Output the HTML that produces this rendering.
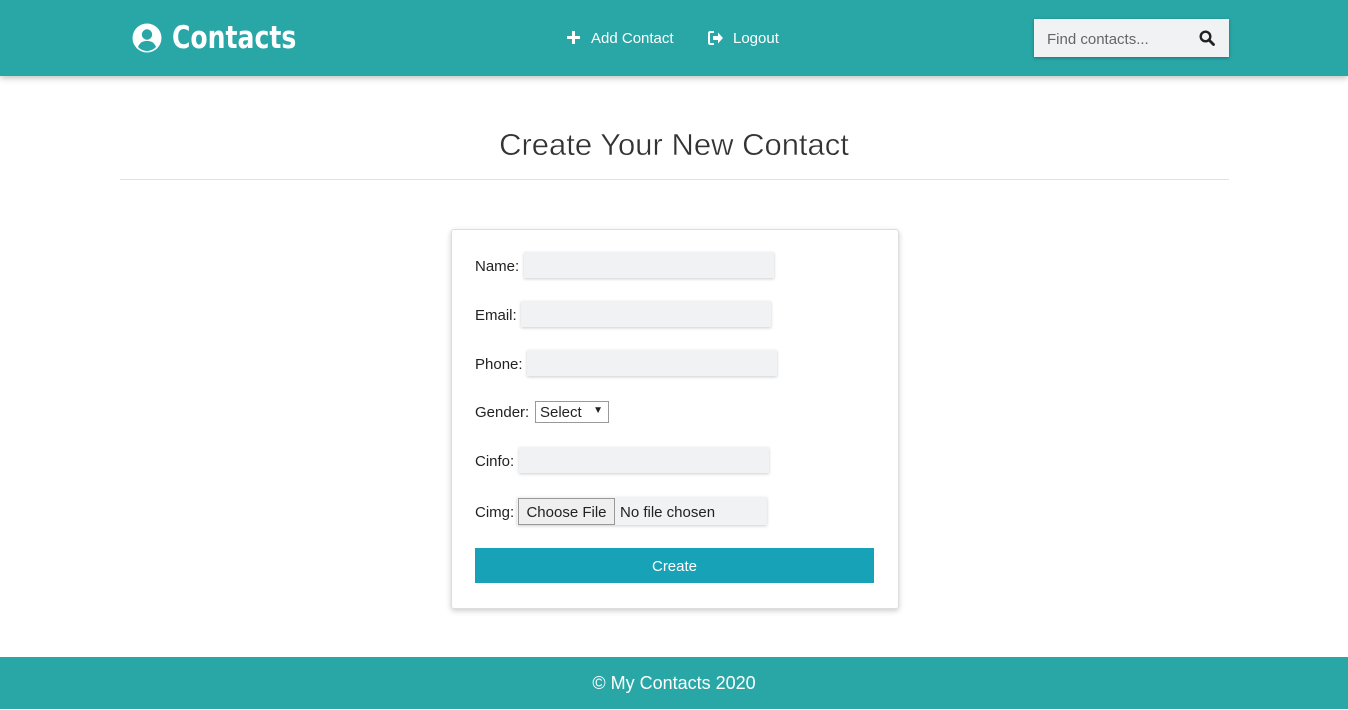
<!DOCTYPE html>
<html><head><style>
body{margin:0;width:1348px;height:709px;position:relative;font-family:"Liberation Sans",sans-serif;background:#fff;overflow:hidden;color:#222}
.a{position:absolute}
.hdr{left:0;top:0;width:1348px;height:76px;background:#29a6a6;box-shadow:0 2px 6px rgba(0,0,0,.25)}
.nav{color:#fff;font-size:15px}
.lbl{font-size:15px;color:#222}
.in{background:#f1f2f3;height:26px;width:250px;box-shadow:0 1px 3px rgba(0,0,0,.2)}
</style></head><body>
<div class="a hdr"></div>
<svg class="a" style="left:132px;top:23px" width="30" height="30" viewBox="0 0 30 30"><circle cx="15" cy="15" r="14.5" fill="#fff"/><circle cx="15" cy="11.5" r="5.2" fill="#29a6a6"/><path d="M6 24c2-5 5-6 9-6s7 1 9 6c-2 2-5 4-9 4s-7-2-9-4z" fill="#29a6a6"/></svg>
<div class="a" style="left:172px;top:20px;color:#fff;font:bold 31px 'DejaVu Sans',sans-serif;transform:scaleX(0.81);transform-origin:left">Contacts</div>
<div class="a" style="left:567px;top:28px;width:14px;height:20px"><div class="a" style="left:0;top:8px;width:13px;height:3px;background:#fff"></div><div class="a" style="left:5px;top:3px;width:3px;height:13px;background:#fff"></div></div>
<div class="a nav" style="left:591px;top:30px">Add Contact</div>
<svg class="a" style="left:708px;top:31px" width="16" height="14" viewBox="0 0 16 14"><path d="M6 1H2.5Q1 1 1 2.5v9Q1 13 2.5 13H6" fill="none" stroke="#fff" stroke-width="2"/><path d="M5 5h5V1.5L15 7l-5 5.5V9H5z" fill="#fff"/></svg>
<div class="a nav" style="left:733px;top:30px">Logout</div>
<div class="a" style="left:1034px;top:19px;width:195px;height:38px;background:#f1f2f3;box-shadow:0 1px 3px rgba(0,0,0,.3)"></div>
<div class="a" style="left:1047px;top:31px;color:#666;font-size:15px">Find contacts...</div>
<svg class="a" style="left:1199px;top:30px" width="16" height="16" viewBox="0 0 16 16"><circle cx="6.5" cy="6.5" r="4.8" fill="none" stroke="#222" stroke-width="2.4"/><path d="M10 10l4.5 4.5" stroke="#222" stroke-width="2.8" stroke-linecap="round"/></svg>
<div class="a" style="left:0;width:1348px;top:127px;text-align:center;font-size:31px;color:#333;-webkit-text-stroke:0.4px #fff">Create Your New Contact</div>
<div class="a" style="left:120px;top:179px;width:1109px;height:1px;background:#e2e2e2"></div>
<div class="a" style="left:451px;top:229px;width:446px;height:378px;border:1px solid #ddd;border-radius:3px;box-shadow:0 2px 6px rgba(0,0,0,.2)"></div>
<div class="a lbl" style="left:475px;top:258px">Name:</div><div class="a in" style="left:524px;top:252px"></div>
<div class="a lbl" style="left:475px;top:307px">Email:</div><div class="a in" style="left:521px;top:301px"></div>
<div class="a lbl" style="left:475px;top:356px">Phone:</div><div class="a in" style="left:527px;top:350px"></div>
<div class="a lbl" style="left:475px;top:404px">Gender:</div>
<div class="a" style="left:535px;top:401px;width:72px;height:20px;border:1px solid #999;font-size:15px;line-height:22px;text-indent:4px">Select<span style="position:absolute;right:5px;font-size:10px;line-height:18px">▼</span></div>
<div class="a lbl" style="left:475px;top:453px">Cinfo:</div><div class="a in" style="left:519px;top:447px"></div>
<div class="a lbl" style="left:475px;top:504px">Cimg:</div><div class="a in" style="left:517px;top:497px;height:28px"></div>
<div class="a" style="left:518px;top:498px;height:27px;background:#efefef;border:1px solid #999;box-sizing:border-box;width:97px;font-size:15px;line-height:27px;text-align:center">Choose File</div>
<div class="a lbl" style="left:620px;top:504px">No file chosen</div>
<div class="a" style="left:475px;top:548px;width:399px;height:35px;background:#17a2b8;color:#fff;font-size:15px;line-height:37px;text-align:center">Create</div>
<div class="a" style="left:0;top:657px;width:1348px;height:52px;background:#29a6a6;color:#fff;font-size:18px;line-height:53px;text-align:center">© My Contacts 2020</div>
</body></html>
